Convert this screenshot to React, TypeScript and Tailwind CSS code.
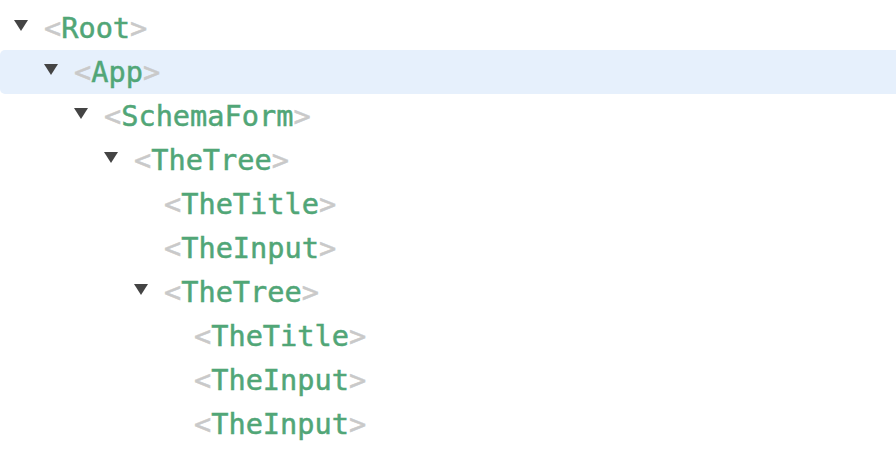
import React from "react";

type Node = { name: string; level: number; arrow: boolean; selected?: boolean };

const nodes: Node[] = [
  { name: "Root", level: 0, arrow: true },
  { name: "App", level: 1, arrow: true, selected: true },
  { name: "SchemaForm", level: 2, arrow: true },
  { name: "TheTree", level: 3, arrow: true },
  { name: "TheTitle", level: 4, arrow: false },
  { name: "TheInput", level: 4, arrow: false },
  { name: "TheTree", level: 4, arrow: true },
  { name: "TheTitle", level: 5, arrow: false },
  { name: "TheInput", level: 5, arrow: false },
  { name: "TheInput", level: 5, arrow: false },
];

function Arrow() {
  return (
    <svg width="14" height="11" viewBox="0 0 14 11" className="block">
      <polygon points="0,0 14,0 7,11" fill="#444444" />
    </svg>
  );
}

export default function App() {
  return (
    <div
      className="w-[896px] h-[452px] bg-white overflow-hidden pt-[6px]"
      style={{ fontFamily: '"DejaVu Sans Mono", "Liberation Mono", monospace' }}
    >
      {nodes.map((n, i) => (
        <div
          key={i}
          className={`flex items-center h-[44px] rounded-l-[5px] ${n.selected ? "bg-[#e6f0fc]" : ""}`}
          style={{ paddingLeft: 14 + n.level * 30 }}
        >
          <div className="w-[30px] flex items-center">
            {n.arrow ? <div className="-mt-[6px]"><Arrow /></div> : null}
          </div>
          <span className="text-[28.6px] leading-none whitespace-pre [-webkit-text-stroke:0.5px]">
            <span className="text-[#c9c9c9]">&lt;</span>
            <span className="text-[#51a677]">{n.name}</span>
            <span className="text-[#c9c9c9]">&gt;</span>
          </span>
        </div>
      ))}
    </div>
  );
}
